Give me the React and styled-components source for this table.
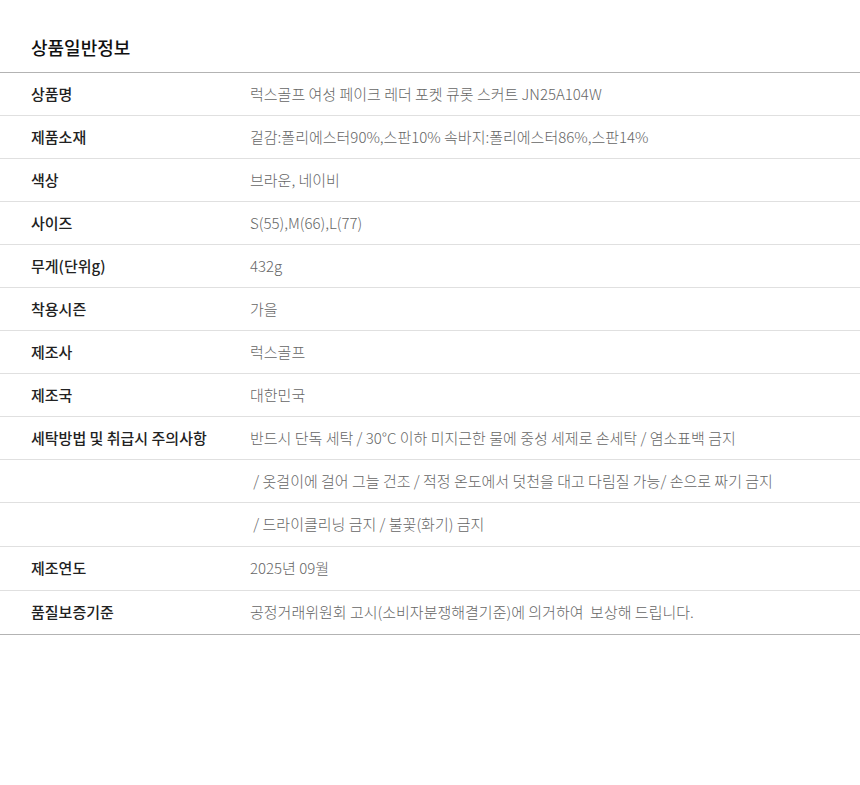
import React from 'react';
import styled, { createGlobalStyle } from 'styled-components';

const GlobalStyles = createGlobalStyle`
  body {
    margin: 0;
    background: #fff;
    font-family: "Noto Sans CJK KR", "Noto Sans", sans-serif;
  }
`;

const Wrap = styled.div`
  width: 860px;
  padding-top: 35px;
`;

const Title = styled.h3`
  margin: 0 0 13px;
  padding-left: 31px;
  font-size: 18px;
  line-height: 24px;
  font-weight: 500;
  color: #111;
`;

const Table = styled.table`
  width: 100%;
  border-collapse: collapse;
  border-top: 1px solid #b3b3b3;
  border-bottom: 1px solid #b3b3b3;
`;

const Row = styled.tr`
  border-top: 1px solid #e0e0e0;
  &:first-child { border-top: 0; }
`;

// cell height minus the 2px lift below the text
const Label = styled.th`
  width: 219px;
  height: ${(p) => (p.h || 42) - 2}px;
  padding: 0 0 2px 31px;
  text-align: left;
  font-size: 15px;
  font-weight: 500;
  color: #222;
`;

const Value = styled.td`
  padding: 0 0 2px;
  font-size: 15px;
  font-weight: 300;
  color: #666;
`;

const rows = [
  ['상품명', '럭스골프 여성 페이크 레더 포켓 큐롯 스커트 JN25A104W'],
  ['제품소재', '겉감:폴리에스터90%,스판10% 속바지:폴리에스터86%,스판14%'],
  ['색상', '브라운, 네이비'],
  ['사이즈', 'S(55),M(66),L(77)'],
  ['무게(단위g)', '432g'],
  ['착용시즌', '가을'],
  ['제조사', '럭스골프'],
  ['제조국', '대한민국'],
  ['세탁방법 및 취급시 주의사항', '반드시 단독 세탁 / 30°C 이하 미지근한 물에 중성 세제로 손세탁 / 염소표백 금지'],
  ['', '\u00a0/ 옷걸이에 걸어 그늘 건조 / 적정 온도에서 덧천을 대고 다림질 가능/ 손으로 짜기 금지'],
  ['', '\u00a0/ 드라이클리닝 금지 / 불꽃(화기) 금지', 43],
  ['제조연도', '2025년 09월', 43],
  ['품질보증기준', '공정거래위원회 고시(소비자분쟁해결기준)에 의거하여\u00a0 보상해 드립니다.', 43],
];

function App() {
  return (
    <Wrap>
      <GlobalStyles />
      <Title>상품일반정보</Title>
      <Table>
        <tbody>
          {rows.map(([label, value, h], i) => (
            <Row key={i}>
              <Label h={h}>{label}</Label>
              <Value>{value}</Value>
            </Row>
          ))}
        </tbody>
      </Table>
    </Wrap>
  );
}

export default App;
